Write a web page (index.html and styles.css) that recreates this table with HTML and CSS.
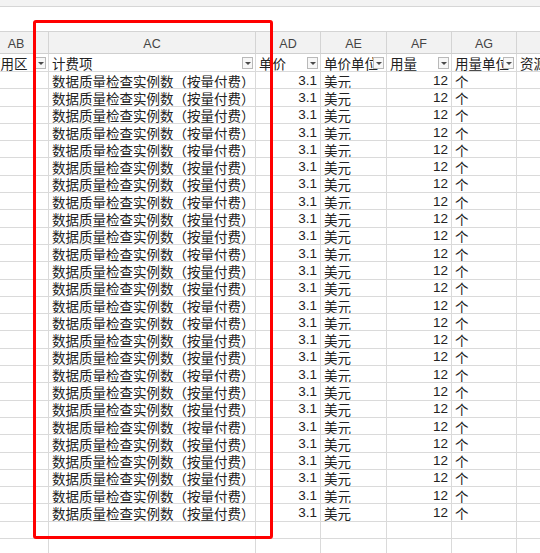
FILE: index.html
```html
<!DOCTYPE html>
<html lang="zh-CN">
<head>
<meta charset="utf-8">
<title>Sheet</title>
<link rel="stylesheet" href="styles.css">
</head>
<body>
<div class="sheet">
  <div class="topbar"></div>
  <div class="blank"></div>
  <div class="grid" id="grid">
    <div class="row colhead">
      <div class="cell">AB</div><div class="cell">AC</div><div class="cell">AD</div><div class="cell">AE</div><div class="cell">AF</div><div class="cell">AG</div><div class="cell"></div>
    </div>
    <div class="row head">
      <div class="cell"><span class="txt">可用区</span><span class="filter"></span></div>
      <div class="cell"><span class="txt">计费项</span><span class="filter"></span></div>
      <div class="cell"><span class="txt">单价</span><span class="filter"></span></div>
      <div class="cell"><span class="txt">单价单位</span><span class="filter"></span></div>
      <div class="cell"><span class="txt">用量</span><span class="filter"></span></div>
      <div class="cell"><span class="txt">用量单位</span><span class="filter"></span></div>
      <div class="cell"><span class="txt">资源类型</span></div>
    </div>
  </div>
  <div class="highlight"></div>
</div>
<script src="script.js"></script>
</body>
</html>
```

FILE: script.js
```js
(function () {
  var grid = document.getElementById('grid');
  var html = '';
  for (var i = 0; i < 26; i++) {
    html += '<div class="row data">' +
      '<div class="cell"></div>' +
      '<div class="cell"><span class="txt">数据质量检查实例数（按量付费）</span></div>' +
      '<div class="cell num"><span class="txt">3.1</span></div>' +
      '<div class="cell"><span class="txt">美元</span></div>' +
      '<div class="cell num"><span class="txt">12</span></div>' +
      '<div class="cell"><span class="txt">个</span></div>' +
      '<div class="cell"></div>' +
      '</div>';
  }
  for (var j = 0; j < 2; j++) {
    html += '<div class="row data">' +
      '<div class="cell"></div><div class="cell"></div><div class="cell"></div><div class="cell"></div>' +
      '<div class="cell"></div><div class="cell"></div><div class="cell"></div>' +
      '</div>';
  }
  grid.insertAdjacentHTML('beforeend', html);
})();
```

FILE: styles.css
```css
* { box-sizing: border-box; }
html, body {
  margin: 0;
  padding: 0;
  background: #ffffff;
}
body {
  font-family: "Noto Sans CJK SC", "Noto Sans", sans-serif;
  font-size: 13.5px;
  color: #222;
  text-spacing-trim: space-all;
}
.sheet {
  position: relative;
  width: 540px;
  height: 553px;
  overflow: hidden;
  background: #fff;
}
.topbar {
  height: 7px;
  background: #f3f3f3;
  border-bottom: 1px solid #d6d6d6;
}
.blank {
  height: 24px;
  background: #fff;
}
.grid {
  margin-left: -16px;
  width: 580px;
}
.row {
  display: grid;
  grid-template-columns: 65px 207px 65px 66px 65px 65px 80px;
}
.cell {
  position: relative;
  border-right: 1px solid #dadada;
  border-bottom: 1px solid #dadada;
  overflow: hidden;
  white-space: nowrap;
  display: flex;
  align-items: center;
  padding: 1px 2px 0 3px;
}
.colhead {
  height: 23px;
  background: #f2f2f2;
  border-top: 1px solid #d4d4d4;
}
.colhead .cell {
  justify-content: center;
  font-family: "Liberation Sans", Arial, sans-serif;
  font-size: 12.5px;
  color: #444;
  border-right-color: #d4d4d4;
  border-bottom-color: #cfcfcf;
  padding: 3px 0 0 0;
}
.head {
  height: 18px;
}
.data {
  height: 17.3px;
}
.txt {
  line-height: 16px;
}
.num {
  justify-content: flex-end;
  padding-right: 3px;
}
.num .txt {
  font-family: "Liberation Sans", Arial, sans-serif;
  font-size: 13.5px;
}
.filter {
  position: absolute;
  right: 2px;
  top: 3px;
  width: 11px;
  height: 12px;
  background: #f7f7f7;
  border: 1px solid #b9b9b9;
}
.filter::after {
  content: "";
  position: absolute;
  left: 2px;
  top: 4px;
  border-left: 3px solid transparent;
  border-right: 3px solid transparent;
  border-top: 3px solid #4a4a4a;
}
.highlight {
  position: absolute;
  left: 33px;
  top: 20px;
  width: 240px;
  height: 519px;
  border: 3px solid #ff0000;
  border-radius: 3px;
  pointer-events: none;
}
```
